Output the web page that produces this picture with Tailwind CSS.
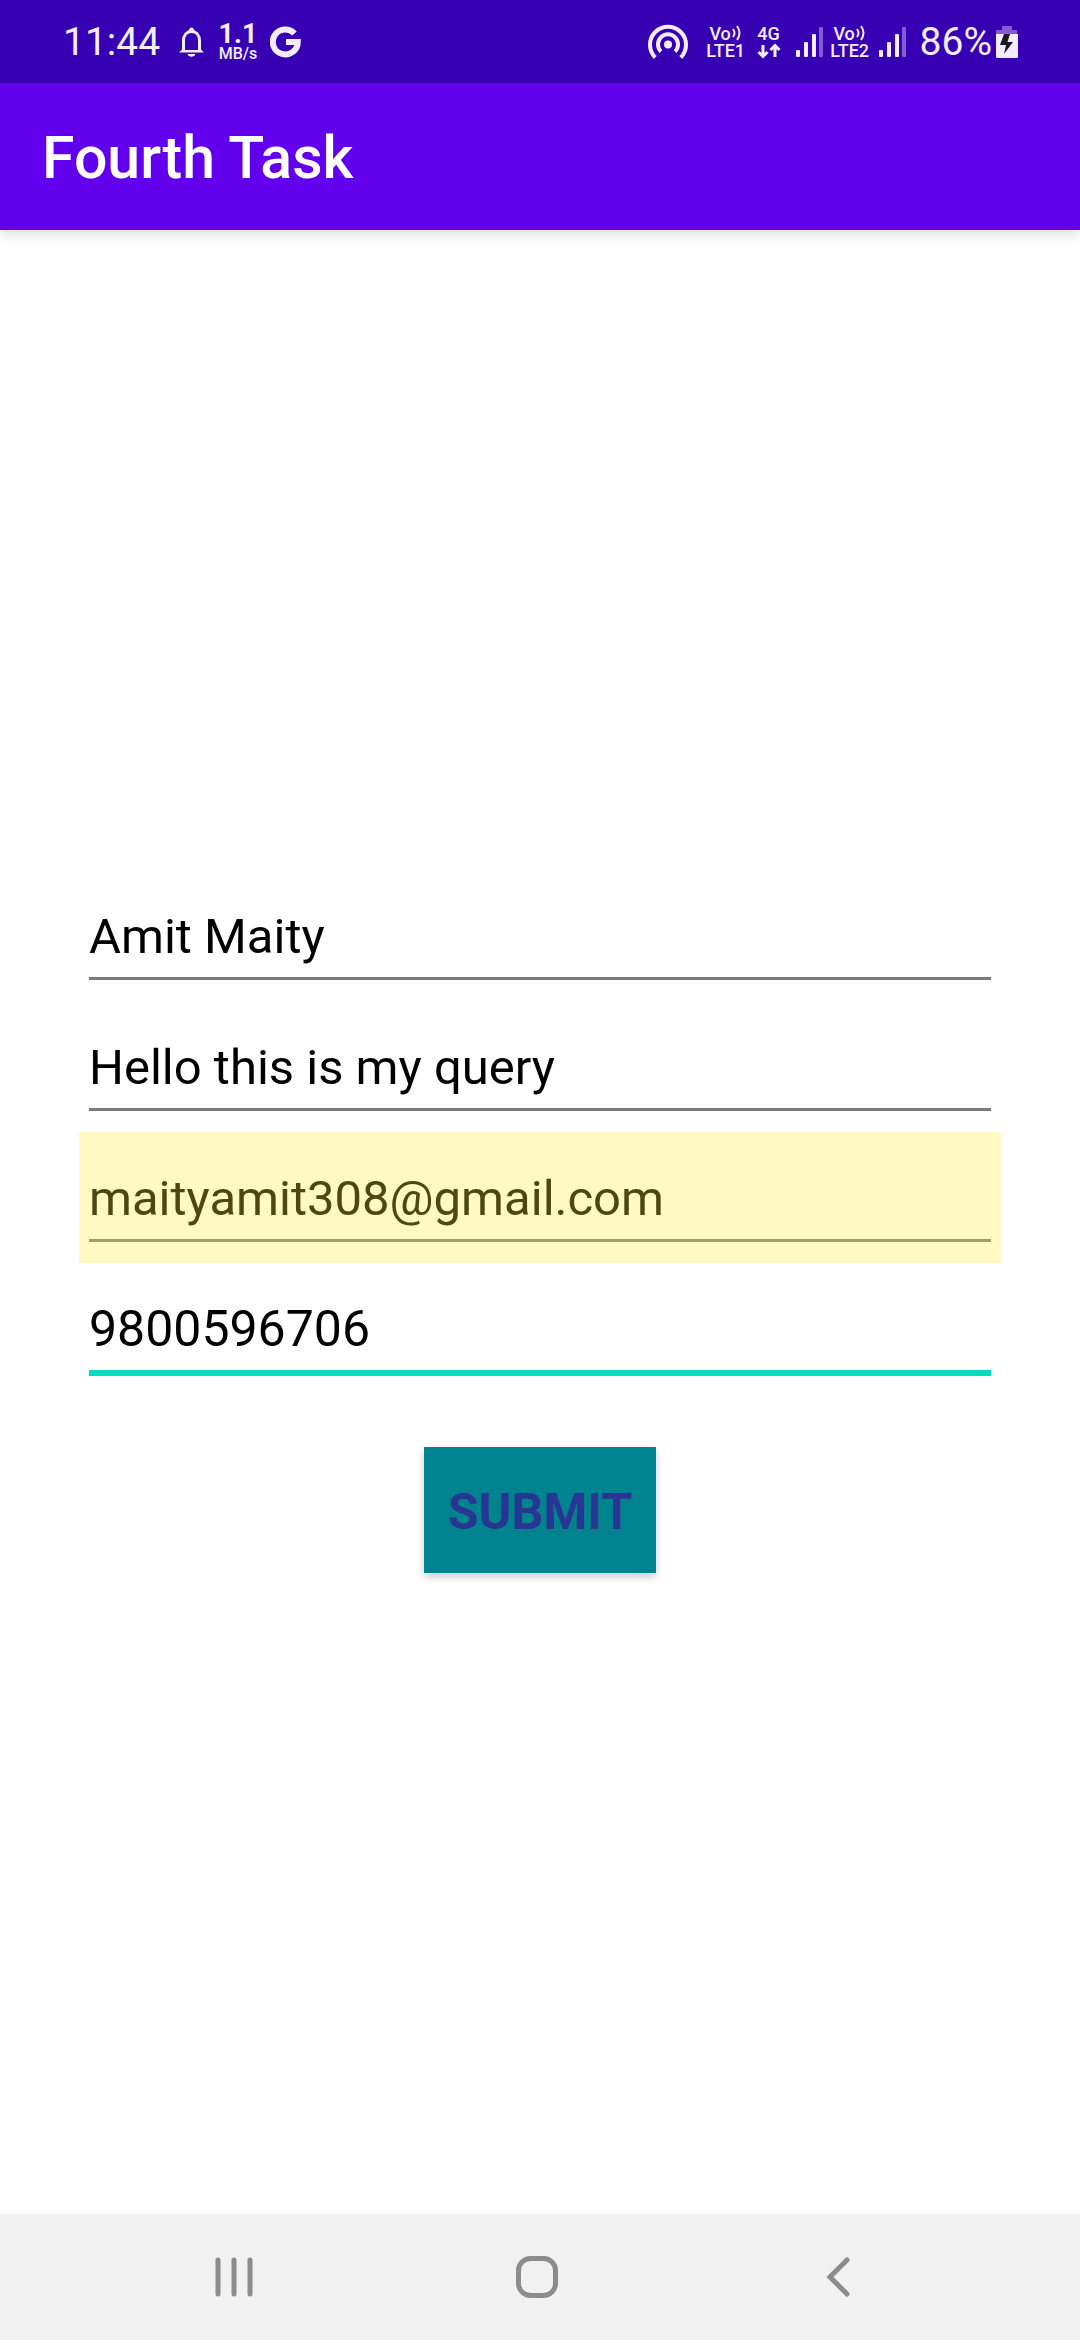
<!DOCTYPE html>
<html lang="en">
<head>
<meta charset="utf-8">
<meta name="viewport" content="width=device-width, initial-scale=1">
<title>Fourth Task</title>
<script src="https://cdn.jsdelivr.net/npm/@tailwindcss/browser@4"></script>
</head>
<body class="flex min-h-screen flex-col bg-white font-['Roboto',sans-serif]">
  <!-- Status bar -->
  <div class="flex h-[83px] items-center justify-between bg-[#3700b3] pr-[62px] pl-[63px] text-[#f3edff]">
    <div class="flex items-center">
      <span class="w-[116px] text-[39px] leading-[84px]">11:44</span>
      <svg class="mr-4 h-[30px] w-[25px]" viewBox="0 0 25 30" fill="none">
        <path d="M4.5 24V14C4.500 8 8 4.500 12.500 4.500S20.500 8 20.500 14V24" stroke="currentColor" stroke-width="3"/>
        <path d="M0 25.500L4 21.500H21L25 25.500ZM9.500 5C9.500 -1 15.500 -1 15.500 5ZM8.500 27H16.500C15.500 30.500 9.500 30.500 8.500 27Z" fill="currentColor"/>
        <path d="M6 13V23H19V13" fill="#3700b3"/>
      </svg>
      <span class="mr-[14px] flex w-9 flex-col items-center">
        <span class="text-[27px] leading-6 font-bold">1.1</span>
        <span class="text-base leading-4 font-medium">MB/s</span>
      </span>
      <svg class="h-8 w-[31px]" viewBox="0 0 31 32" fill="none" stroke="currentColor" stroke-width="6">
        <path d="M24.500 7.500A12.500 12.500 0 1 0 27.800 16H16" />
      </svg>
    </div>
    <div class="flex items-center">
      <svg class="mr-[18px] h-9 w-10" viewBox="0 0 40 36" fill="none" stroke="currentColor" stroke-width="4">
        <path d="M7.300 33.500A18 18 0 1 1 32.700 33.500M13 27.500A10 10 0 1 1 27 27.500"/>
        <circle cx="20" cy="20.500" r="4" fill="currentColor" stroke="none"/>
      </svg>
      <span class="mr-[11px] flex w-10 flex-col items-center text-lg leading-[17px] font-medium">
        <span class="flex items-center">Vo<svg class="h-4 w-[11px]" viewBox="0 0 11 16" fill="none" stroke="currentColor" stroke-width="2"><path d="M2 4Q5 8 2 12M6 1Q11 8 6 15"/></svg></span>
        <span>LTE1</span>
      </span>
      <span class="mr-[14px] flex w-6 flex-col items-center text-lg leading-[17px] font-medium">
        <span>4G</span>
        <svg class="h-[17px] w-6" viewBox="0 0 24 17" fill="none" stroke="currentColor" stroke-width="3"><path d="M6 3V15M1.500 10L6 14.500L10.500 10M18 15V3M13.500 8L18 3.500L22.500 8"/></svg>
      </span>
      <svg class="mr-[5px] h-8 w-[29px]" viewBox="0 0 29 32" fill="currentColor">
        <rect x="1" y="24" width="4" height="7" rx="1"/><rect x="9" y="16" width="4" height="15" rx="1"/><rect x="17" y="8" width="4" height="23" rx="1"/><rect x="24" y="1" width="4" height="30" rx="1" fill="#835bd4"/>
      </svg>
      <span class="mr-[7px] flex w-[42px] flex-col items-center text-lg leading-[17px] font-medium">
        <span class="flex items-center">Vo<svg class="h-4 w-[11px]" viewBox="0 0 11 16" fill="none" stroke="currentColor" stroke-width="2"><path d="M2 4Q5 8 2 12M6 1Q11 8 6 15"/></svg></span>
        <span>LTE2</span>
      </span>
      <svg class="mr-[13px] h-8 w-[29px]" viewBox="0 0 29 32" fill="currentColor">
        <rect x="1" y="24" width="4" height="7" rx="1"/><rect x="9" y="16" width="4" height="15" rx="1"/><rect x="17" y="8" width="4" height="23" rx="1"/><rect x="24" y="1" width="4" height="30" rx="1" fill="#835bd4"/>
      </svg>
      <span class="mr-1 text-[39px] leading-[84px]">86%</span>
      <svg class="h-[34px] w-[22px]" viewBox="0 0 22 34">
        <path d="M6 1H16V5H21V9H0V5H6Z" fill="#835bd4"/>
        <path d="M0 9H22V32Q22 33 20 33H2Q0 33 0 32Z" fill="currentColor"/>
        <path d="M8 9H14L11.500 17H17L8 29L10 20H4Z" fill="#1a1720"/>
      </svg>
    </div>
  </div>

  <!-- App bar -->
  <header class="flex h-[147px] items-center bg-[#6200ee] px-[42px] shadow-[0_4px_12px_rgba(0,0,0,0.14)]">
    <h1 class="pt-1 text-[59px] font-medium text-white">Fourth Task</h1>
  </header>

  <main class="flex grow flex-col justify-center px-[79px] pb-px">
    <form class="flex flex-col">
      <div class="h-[131px] px-[10px] pt-[42px]">
        <input aria-label="Name" type="text" value="Amit Maity" class="block h-[68px] w-full border-b-[3px] border-[#7b7b7b] pb-4 text-[49px] text-black outline-none">
      </div>
      <div class="h-[131px] px-[10px] pt-[42px]">
        <input aria-label="Query" type="text" value="Hello this is my query" class="block h-[68px] w-full border-b-[3px] border-[#7b7b7b] pb-4 text-[49px] text-black outline-none">
      </div>
      <div class="h-[131px] bg-[#fff9c4] px-[10px] pt-[42px]">
        <input aria-label="Email" type="email" value="maityamit308@gmail.com" class="block h-[68px] w-full border-b-[3px] border-[#a39d66] pb-4 text-[49px] text-[#4d4712] outline-none">
      </div>
      <div class="h-[131px] px-[10px] pt-[42px]">
        <input aria-label="Phone" type="tel" value="9800596706" class="block h-[71px] w-full border-b-[6px] border-[#08d9c6] pb-4 text-[50px] text-black outline-none">
      </div>
      <button type="button" class="mt-[53px] h-[126px] self-center bg-[#00838f] px-6 pt-1 text-[50px] font-bold text-[#283593] shadow-[0_4px_8px_rgba(0,0,0,0.2)]">SUBMIT</button>
    </form>
  </main>

  <!-- Navigation bar -->
  <nav class="flex h-[126px] items-center justify-between bg-[#f1f1f1] pr-[212px] pl-[206px] text-[#8c8c8c]">
    <button type="button" aria-label="Recent apps" class="w-14">
      <svg class="mx-auto h-11 w-11" viewBox="0 0 44 44" fill="none" stroke="currentColor" stroke-width="5" stroke-linecap="round"><path d="M6 5V39M22 5V39M38 5V39"/></svg>
    </button>
    <button type="button" aria-label="Home" class="w-14">
      <svg class="mx-auto h-11 w-11" viewBox="0 0 44 44" fill="none" stroke="currentColor" stroke-width="5"><rect x="3.500" y="3.500" width="37" height="37" rx="12"/></svg>
    </button>
    <button type="button" aria-label="Back" class="w-14">
      <svg class="mx-auto h-11 w-11" viewBox="0 0 44 44" fill="none" stroke="currentColor" stroke-width="5" stroke-linecap="round"><path d="M29 5L12 22L29 39"/></svg>
    </button>
  </nav>
</body>
</html>
